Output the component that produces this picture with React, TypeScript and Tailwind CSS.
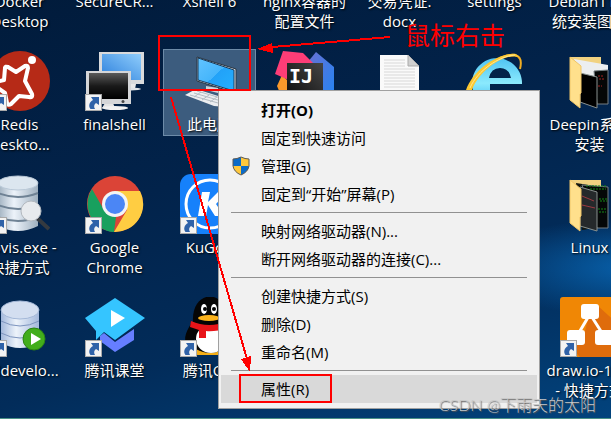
import type { ReactNode } from 'react';
import { clsx } from 'clsx';

function ShortcutBadge() {
  return (
    <svg viewBox="0 0 17 17" className="absolute bottom-0 left-0 size-[17px]">
      <rect x="0.5" y="0.5" width="16" height="16" fill="#f3f3f3" stroke="#a9a9a9" />
      <path d="M6 3h8v8l-3-2c-2 1.500-2.500 3.500-1 6H5.500C3 11.500 4.500 8 8 6z" fill="#2f62a8" />
    </svg>
  );
}

function RedisIcon() {
  return (
    <svg viewBox="0 0 60 60" className="size-[60px]">
      <circle cx="30" cy="30" r="30" fill="#b62a17" />
      <path
        d="M15 17q0-2 3-1l8 5 9-6q3-1 3 2l-3 13 7 13q1 4-3 3l-10-1-8 8q-3 2-4-1l-2-10-10-7q-2-2 1-4l8-2z"
        fill="none"
        stroke="#fff"
        strokeWidth="4"
        strokeLinejoin="round"
      />
      <circle cx="42" cy="9" r="4" fill="#fff" />
    </svg>
  );
}

function FinalShellIcon() {
  return (
    <svg viewBox="0 0 60 60" className="size-[60px]">
      <defs>
        <linearGradient id="fs-blue" x1="0" y1="1" x2="1" y2="0">
          <stop offset="0" stopColor="#2b7fdc" />
          <stop offset="1" stopColor="#8fcdfb" />
        </linearGradient>
        <linearGradient id="fs-black" x1="0" y1="0" x2="0" y2="1">
          <stop offset="0" stopColor="#5a5a5a" />
          <stop offset="0.500" stopColor="#1a1a1a" />
          <stop offset="1" stopColor="#000" />
        </linearGradient>
      </defs>
      <path d="M34 38h16l1-5h-8z" fill="#e8e8e8" />
      <rect x="14" y="1" width="45" height="32" fill="#d9dadc" />
      <rect x="17" y="3" width="39" height="26" fill="url(#fs-blue)" />
      <ellipse cx="46" cy="38" rx="10" ry="1.500" fill="#dfe3e7" />
      <path d="M20 52h8l2 5H17z" fill="#e4e4e4" />
      <ellipse cx="30" cy="57" rx="13" ry="2" fill="#f1f1f1" />
      <rect x="1" y="20" width="45" height="33" fill="#d5d6d8" />
      <rect x="4" y="22" width="39" height="26" fill="url(#fs-black)" />
      <circle cx="38" cy="50.500" r="1.500" fill="#444" />
    </svg>
  );
}

function ThisPcIcon() {
  return (
    <svg viewBox="0 0 60 60" className="size-[60px]">
      <defs>
        <linearGradient id="pc-screen" x1="0" y1="0" x2="1" y2="1">
          <stop offset="0" stopColor="#62c4ff" />
          <stop offset="0.500" stopColor="#45b5fb" />
          <stop offset="0.500" stopColor="#22a2f8" />
          <stop offset="1" stopColor="#25b0ff" />
        </linearGradient>
      </defs>
      <path d="M17 6l39 12v24L17 30z" fill="#d9dee3" stroke="#2a3540" />
      <path d="M18 7l36 12v21L18 29z" fill="url(#pc-screen)" stroke="#1b3c5c" />
      <path d="M26 35l12 2v5l-12-3z" fill="#cfd5da" />
      <path d="M5 44l11-6 38 12-8 6-12-1z" fill="#eceef0" />
      <path d="M10 44l35 10M14 42l34 10M17 40l34 10M14 46l7-5M22 49l7-5M30 51l7-5M38 53l7-5" stroke="#b4bcc3" />
    </svg>
  );
}

function IntelliJIcon() {
  return (
    <svg viewBox="0 0 60 60" className="size-[60px]">
      <defs>
        <linearGradient id="ij-blue" x1="0" y1="0" x2="1" y2="1">
          <stop offset="0" stopColor="#6a6fd2" />
          <stop offset="1" stopColor="#1c87f7" />
        </linearGradient>
        <linearGradient id="ij-block" x1="1" y1="0" x2="0" y2="1">
          <stop offset="0" stopColor="#454545" />
          <stop offset="1" stopColor="#0c0c0c" />
        </linearGradient>
      </defs>
      <path d="M7 24l8 8-4 24-9-21z" fill="#f9982b" />
      <path d="M32 12l9-11 18 15v30L40 58z" fill="url(#ij-blue)" />
      <path d="M8 0l20 2 12 12-24 16L0 23z" fill="#fd3d77" />
      <rect x="12" y="12" width="36" height="36" fill="url(#ij-block)" />
      <text x="14" y="32" fill="#fff" className="font-['DejaVu_Sans_Mono'] text-[20px] font-bold">IJ</text>
    </svg>
  );
}

function DocumentIcon() {
  return (
    <svg viewBox="0 0 60 60" className="size-[60px]">
      <path d="M10 4h28l11 11v43H10z" fill="#fafafa" />
      <path d="M38 4v11h11z" fill="#d0d0d0" stroke="#aaa" />
      <path d="M14 9h21M14 12h21M14 15h21M14 18h31M14 21h31M14 24h31M14 27h31M14 30h31M14 33h31M14 36h31" stroke="#d8d8d8" />
    </svg>
  );
}

function ExplorerIcon() {
  return (
    <svg viewBox="0 0 60 60" className="size-[60px]">
      <defs>
        <linearGradient id="ie-blue" x1="0" y1="0" x2="0" y2="1">
          <stop offset="0" stopColor="#4fc3f2" />
          <stop offset="0.500" stopColor="#8beafd" />
          <stop offset="1" stopColor="#2fb0ee" />
        </linearGradient>
      </defs>
      <path
        d="M57 33A25 25 0 1 0 55 42H41q-8 8-16-3v-6zM24 27q2-10 11-10t11 10z"
        fill="url(#ie-blue)"
        fillRule="evenodd"
      />
      <path d="M3 42C10 20 36 2 50 4q8 2 5 14" fill="none" stroke="#f1ad22" strokeWidth="2" />
      <path d="M1 39C8 19 34 1 51 3l3 3C38 2 14 20 7 39z" fill="#fcc832" />
      <path d="M5 37C12 20 34 5 50 4" fill="none" stroke="#ffe895" />
    </svg>
  );
}

function FolderIcon({ green = false }: { green?: boolean }) {
  return (
    <svg viewBox="0 0 60 60" className="size-[60px]">
      <path d="M10 6h31v36H10z" fill="#f1d281" />
      <path d={green ? 'M16 9l32 5v38l-26 4z' : 'M14 8l34 6v8l-26 8z'} fill={green ? '#101510' : '#eceef0'} />
      <path d={green ? 'M22 11l26 2v41H37z' : 'M34 20l14-1v34H37z'} fill="#050707" stroke="#777f83" />
      <path d={green ? 'M20 13l17 5v39l-17-5z' : 'M20 22l17 4v31l-17-6z'} fill={green ? '#25292b' : '#000'} stroke="#89918f" />
      <path
        d={green ? 'M26 12h20M30 15h16M39 25h8M40 27h7M38 35h8M39 38h7' : 'M38 25h5M39 28h6M38 35h4'}
        stroke={green ? '#168a17' : '#a52323'}
        strokeDasharray="2 1"
      />
      {green && <path d="M22 22l12 5M22 31l13 3" stroke="#9c3940" />}
      <path d="M10 6l11 9v27l-1 1v14l-10-8z" fill="#ffe08c" stroke="#efc568" />
    </svg>
  );
}

function DatabaseIcon({ tool }: { tool: 'search' | 'run' }) {
  const run = tool === 'run';
  const body = run ? '#a3b8dc' : '#9fb0bf';
  return (
    <svg viewBox="0 0 60 60" className="size-[60px]">
      <defs>
        <linearGradient id={`db-${tool}`}>
          <stop offset="0" stopColor={body} />
          <stop offset="0.400" stopColor="#edf3fa" />
          <stop offset="1" stopColor={body} />
        </linearGradient>
      </defs>
      {run ? (
        <>
          <path d="M11 12h38v34q-19 10-38 0z" fill="url(#db-run)" />
          <ellipse cx="30" cy="13" rx="19" ry="9" fill="#d3def0" stroke="#a4b8d8" />
          <path d="M11 24q19 10 38 0M11 36q19 10 38 0" fill="none" stroke="#7d94be" />
          <circle cx="44" cy="42" r="11" fill="#42ad1b" stroke="#2c8314" />
          <path d="M41 36l10 6-10 6z" fill="#fff" />
        </>
      ) : (
        <>
          <path d="M8 9h40v43q-20 10-40 0z" fill="url(#db-search)" />
          <ellipse cx="28" cy="9" rx="20" ry="7" fill="#dce6ef" stroke="#b9c8d7" />
          <path d="M8 19q20 8 40 0M8 31q20 8 40 0M8 43q20 8 40 0" fill="none" stroke="#6f8294" strokeWidth="2" />
          <path d="M47 44l12 11" stroke="#353a40" strokeWidth="4" />
          <circle cx="41" cy="37" r="10" fill="#e8ebee" stroke="#b3b9bf" />
        </>
      )}
    </svg>
  );
}

function ChromeIcon() {
  return (
    <svg viewBox="0 0 60 60" className="size-[60px]">
      <circle cx="30" cy="30" r="28" fill="#db4437" />
      <path d="M7 15l12 21 12 7-2 15A28 28 0 0 1 7 15z" fill="#18a05e" />
      <path d="M30 17h25a28 28 0 0 1-26 41l13-22z" fill="#ffcd42" />
      <circle cx="30" cy="30" r="13" fill="#f4f4f4" />
      <circle cx="30" cy="30" r="10" fill="#4b86f5" />
    </svg>
  );
}

function KuGouIcon() {
  return (
    <svg viewBox="0 0 60 60" className="size-[60px]">
      <rect width="60" height="60" rx="11" fill="#1681fb" />
      <circle cx="30" cy="30" r="24" fill="none" stroke="#fff" strokeWidth="3" />
      <path d="M22 18h8l-2 10 10-10h9L36 30l8 12h-9l-7-11-2 11h-8z" fill="#fff" />
    </svg>
  );
}

function ClassroomIcon() {
  return (
    <svg viewBox="0 0 60 60" className="size-[60px]">
      <path d="M15 39l4-3 11 9 19-13v11L30 55 15 44z" fill="#667eff" />
      <path d="M30 1l30 20-30 22-11-8-8 8V34L0 21z" fill="#35c5ff" />
      <path d="M26 13l14 8-14 9z" fill="#fff" />
    </svg>
  );
}

function PenguinIcon() {
  return (
    <svg viewBox="0 0 60 60" className="size-[60px]">
      <path d="M14 54q10-7 32 0 2 5-8 4H18q-5 0-4-4z" fill="#f5af18" />
      <path d="M12 25Q0 44 9 47l6-5 1 10q14 8 28 0l2-10 6 5q8-4-4-22z" fill="#050505" />
      <path d="M13 25C11-9 49-9 47 25z" fill="#050505" />
      <ellipse cx="31" cy="42" rx="15" ry="14" fill="#fff" />
      <ellipse cx="24" cy="12" rx="3" ry="5" fill="#fff" />
      <ellipse cx="34" cy="12" rx="3" ry="5" fill="#fff" />
      <circle cx="25" cy="12" r="2" />
      <circle cx="34" cy="12" r="2" />
      <ellipse cx="29" cy="21" rx="11" ry="3" fill="#fbb21b" />
      <path d="M11 24q18 8 37 0v7q-13 4-22 3v7h-7v-8l-9-3z" fill="#e81419" />
    </svg>
  );
}

function DrawIoIcon() {
  return (
    <svg viewBox="0 0 60 60" className="size-[60px]">
      <rect width="60" height="60" rx="3" fill="#f08705" />
      <path d="M38 9l22 20v31H20L8 47l17-13 3-12z" fill="#df6c0c" />
      <path d="M30 17L17 39M30 17l14 22" stroke="#fff" strokeWidth="3" />
      <rect x="21" y="7" width="18" height="15" rx="3" fill="#fff" />
      <rect x="7" y="33" width="18" height="15" rx="3" fill="#fff" />
      <rect x="35" y="33" width="18" height="15" rx="3" fill="#fff" />
    </svg>
  );
}

interface DesktopItem {
  lines: string[];
  icon?: ReactNode;
  shortcut?: boolean;
  selected?: boolean;
}

const desktopItems: DesktopItem[] = [
  { lines: ['Docker', 'Desktop'] },
  { lines: ['SecureCR...'] },
  { lines: ['Xshell 6'] },
  { lines: ['nginx容器的', '配置文件'] },
  { lines: ['交易凭证.', 'docx'] },
  { lines: ['settings'] },
  { lines: ['Debian11系', '统安装图片'] },
  { lines: ['Redis', 'Deskto...'], icon: <RedisIcon />, shortcut: true },
  { lines: ['finalshell'], icon: <FinalShellIcon />, shortcut: true },
  { lines: ['此电脑'], icon: <ThisPcIcon />, selected: true },
  { lines: [], icon: <IntelliJIcon /> },
  { lines: [], icon: <DocumentIcon /> },
  { lines: [], icon: <ExplorerIcon /> },
  { lines: ['Deepin系统', '安装'], icon: <FolderIcon /> },
  { lines: ['dbvis.exe -', '快捷方式'], icon: <DatabaseIcon tool="search" />, shortcut: true },
  { lines: ['Google', 'Chrome'], icon: <ChromeIcon />, shortcut: true },
  { lines: ['KuGou'], icon: <KuGouIcon />, shortcut: true },
  { lines: [] },
  { lines: [] },
  { lines: [] },
  { lines: ['Linux'], icon: <FolderIcon green /> },
  { lines: ['sqldevelo...'], icon: <DatabaseIcon tool="run" />, shortcut: true },
  { lines: ['腾讯课堂'], icon: <ClassroomIcon />, shortcut: true },
  { lines: ['腾讯QQ'], icon: <PenguinIcon />, shortcut: true },
  { lines: [] },
  { lines: [] },
  { lines: [] },
  { lines: ['draw.io-13...', '- 快捷方式'], icon: <DrawIoIcon />, shortcut: true },
];

function DesktopIcon({ lines, icon, shortcut, selected }: DesktopItem) {
  return (
    <div className="h-[123px] px-px">
      <div
        className={clsx(
          'flex flex-col items-center gap-[3px] border py-px text-[15px] leading-5 text-white',
          selected ? 'border-[#6d8ba8] bg-[#3c5c7e]' : 'border-transparent'
        )}
      >
        <div className="relative size-[60px]">
          {icon}
          {shortcut && <ShortcutBadge />}
        </div>
        <div className="flex flex-col items-center whitespace-nowrap [text-shadow:1px_1px_2px_#000]">
          {lines.map((line) => (
            <span key={line}>{line}</span>
          ))}
        </div>
      </div>
    </div>
  );
}

function ShieldIcon() {
  return (
    <svg viewBox="0 0 18 20" className="h-5 w-[18px]">
      <path d="M9 1q4 2 8 2v7q-1 6-8 9-7-3-8-9V3q4 0 8-2z" fill="#ffc83d" />
      <path d="M9 1v9H1V3q4 0 8-2zM9 10h8q-1 6-8 9z" fill="#0b6bc8" transform="matrix(-1 0 0 1 18 0)" opacity="0" />
      <path d="M9 10V1q4 2 8 2v7zM9 10v9q-7-3-8-9z" fill="#ffc83d" />
      <path d="M9 1v9H1V3q4 0 8-2zM9 10h8q-1 6-8 9z" fill="#0b6bc8" />
      <path d="M9 1q4 2 8 2v7q-1 6-8 9-7-3-8-9V3q4 0 8-2z" fill="none" stroke="#5b5b5b" />
    </svg>
  );
}

interface MenuItem {
  label: string;
  primary?: boolean;
  shield?: boolean;
  active?: boolean;
}

const menuGroups: MenuItem[][] = [
  [
    { label: '打开(O)', primary: true },
    { label: '固定到快速访问' },
    { label: '管理(G)', shield: true },
    { label: '固定到“开始”屏幕(P)' },
  ],
  [{ label: '映射网络驱动器(N)...' }, { label: '断开网络驱动器的连接(C)...' }],
  [{ label: '创建快捷方式(S)' }, { label: '删除(D)' }, { label: '重命名(M)' }],
  [{ label: '属性(R)', active: true }],
];

function ContextMenu() {
  return (
    <div
      role="menu"
      className="absolute top-[90px] left-[218px] w-[322px] border border-[#a0a0a0] bg-[#f1f1f1] px-[2px] py-[5px] text-[15px] text-black"
    >
      {menuGroups.map((group, i) => (
        <div key={i}>
          {i > 0 && <hr className="mx-[10px] my-1 border-[#919191]" />}
          {group.map((item) => (
            <button
              key={item.label}
              type="button"
              role="menuitem"
              className={clsx(
                'flex h-7 w-full items-center text-left whitespace-nowrap',
                item.primary && 'font-bold',
                item.active && 'bg-[#d9d9d9]'
              )}
            >
              <span className="flex w-10 shrink-0 pl-[11px]">{item.shield && <ShieldIcon />}</span>
              {item.label}
            </button>
          ))}
        </div>
      ))}
    </div>
  );
}

function Annotations() {
  return (
    <>
      <svg
        viewBox="0 0 611 422"
        shapeRendering="crispEdges"
        className="pointer-events-none absolute top-0 left-0 h-[422px] w-[611px]"
      >
        <g fill="none" stroke="#f00" strokeWidth="2">
          <rect x="159" y="36" width="91" height="54" />
          <rect x="240" y="375" width="91" height="27" />
          <path d="M390 37L272 47M171 97l76 262" />
        </g>
        <path d="M257 49l15-6 1 10zM250 372l-9-13 10-3z" fill="#f00" />
      </svg>
      <p className="absolute top-[17px] left-[405px] text-[25px] leading-9 text-[#f00]">鼠标右击</p>
      <p className="absolute right-[15px] bottom-[7px] font-['Lato','Noto_Sans_CJK_SC',sans-serif] text-[16px] leading-5 font-light text-[#c9c9c9] [text-shadow:1px_1px_1px_#555]">
        CSDN @下雨天的太阳
      </p>
    </>
  );
}

export default function App() {
  return (
    <div className="relative overflow-hidden bg-white pb-[3px] font-['Open_Sans','Noto_Sans_CJK_SC',sans-serif]">
      <main className="h-[419px] overflow-hidden border-b border-[#4a9187] bg-[radial-gradient(170px_50px_at_105%_64%,#0862ad_0%,transparent_100%),linear-gradient(165deg,#011b3b_0%,#02234b_40%,#022c5a_70%,#02437d_100%)]">
        <div className="-mt-[74px] -ml-7 grid w-max grid-cols-[repeat(7,95px)]">
          {desktopItems.map((item, i) => (
            <DesktopIcon key={i} {...item} />
          ))}
        </div>
      </main>
      <ContextMenu />
      <Annotations />
    </div>
  );
}
